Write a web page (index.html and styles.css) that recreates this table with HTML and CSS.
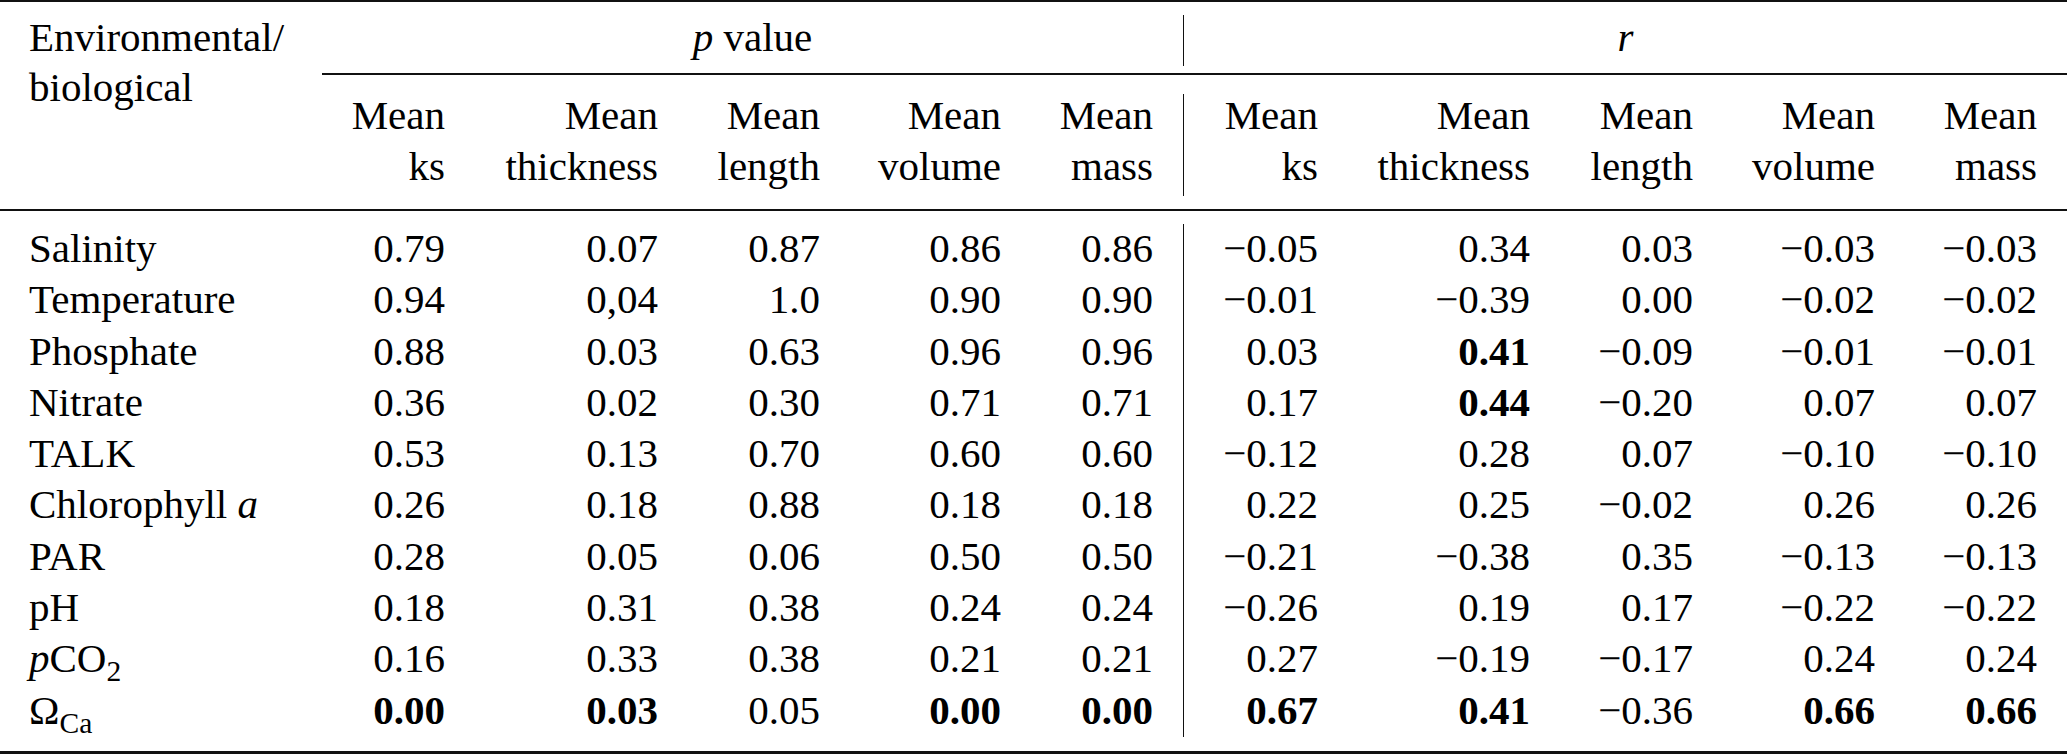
FILE: index.html
```html
<!DOCTYPE html>
<html lang="en">
<head>
<meta charset="utf-8">
<title>Correlation table</title>
<link rel="stylesheet" href="styles.css">
</head>
<body>
<div class="tbl">
  <div class="head">
    <div class="lab hlab">Environmental/<br>biological</div>
    <div class="grp grp-p"><i>p</i> value</div>
    <div class="vdiv vA"></div>
    <div class="grp grp-r"><i>r</i></div>
    <div class="cmid"></div>
    <div class="hc">Mean<br>ks</div>
    <div class="hc">Mean<br>thickness</div>
    <div class="hc">Mean<br>length</div>
    <div class="hc">Mean<br>volume</div>
    <div class="hc">Mean<br>mass</div>
    <div class="vdiv vB"></div>
    <div class="hc">Mean<br>ks</div>
    <div class="hc">Mean<br>thickness</div>
    <div class="hc">Mean<br>length</div>
    <div class="hc">Mean<br>volume</div>
    <div class="hc">Mean<br>mass</div>
  </div>
  <div class="body">
    <div class="vdiv vBody"></div>

    <div class="lab">Salinity</div>
    <div class="n">0.79</div><div class="n">0.07</div><div class="n">0.87</div><div class="n">0.86</div><div class="n">0.86</div>
    <div class="n">&minus;0.05</div><div class="n">0.34</div><div class="n">0.03</div><div class="n">&minus;0.03</div><div class="n">&minus;0.03</div>

    <div class="lab">Temperature</div>
    <div class="n">0.94</div><div class="n">0,04</div><div class="n">1.0</div><div class="n">0.90</div><div class="n">0.90</div>
    <div class="n">&minus;0.01</div><div class="n">&minus;0.39</div><div class="n">0.00</div><div class="n">&minus;0.02</div><div class="n">&minus;0.02</div>

    <div class="lab">Phosphate</div>
    <div class="n">0.88</div><div class="n">0.03</div><div class="n">0.63</div><div class="n">0.96</div><div class="n">0.96</div>
    <div class="n">0.03</div><div class="n b">0.41</div><div class="n">&minus;0.09</div><div class="n">&minus;0.01</div><div class="n">&minus;0.01</div>

    <div class="lab">Nitrate</div>
    <div class="n">0.36</div><div class="n">0.02</div><div class="n">0.30</div><div class="n">0.71</div><div class="n">0.71</div>
    <div class="n">0.17</div><div class="n b">0.44</div><div class="n">&minus;0.20</div><div class="n">0.07</div><div class="n">0.07</div>

    <div class="lab">TALK</div>
    <div class="n">0.53</div><div class="n">0.13</div><div class="n">0.70</div><div class="n">0.60</div><div class="n">0.60</div>
    <div class="n">&minus;0.12</div><div class="n">0.28</div><div class="n">0.07</div><div class="n">&minus;0.10</div><div class="n">&minus;0.10</div>

    <div class="lab">Chlorophyll <i>a</i></div>
    <div class="n">0.26</div><div class="n">0.18</div><div class="n">0.88</div><div class="n">0.18</div><div class="n">0.18</div>
    <div class="n">0.22</div><div class="n">0.25</div><div class="n">&minus;0.02</div><div class="n">0.26</div><div class="n">0.26</div>

    <div class="lab">PAR</div>
    <div class="n">0.28</div><div class="n">0.05</div><div class="n">0.06</div><div class="n">0.50</div><div class="n">0.50</div>
    <div class="n">&minus;0.21</div><div class="n">&minus;0.38</div><div class="n">0.35</div><div class="n">&minus;0.13</div><div class="n">&minus;0.13</div>

    <div class="lab">pH</div>
    <div class="n">0.18</div><div class="n">0.31</div><div class="n">0.38</div><div class="n">0.24</div><div class="n">0.24</div>
    <div class="n">&minus;0.26</div><div class="n">0.19</div><div class="n">0.17</div><div class="n">&minus;0.22</div><div class="n">&minus;0.22</div>

    <div class="lab"><i>p</i>CO<sub>2</sub></div>
    <div class="n">0.16</div><div class="n">0.33</div><div class="n">0.38</div><div class="n">0.21</div><div class="n">0.21</div>
    <div class="n">0.27</div><div class="n">&minus;0.19</div><div class="n">&minus;0.17</div><div class="n">0.24</div><div class="n">0.24</div>

    <div class="lab">&Omega;<sub>Ca</sub></div>
    <div class="n b">0.00</div><div class="n b">0.03</div><div class="n">0.05</div><div class="n b">0.00</div><div class="n b">0.00</div>
    <div class="n b">0.67</div><div class="n b">0.41</div><div class="n">&minus;0.36</div><div class="n b">0.66</div><div class="n b">0.66</div>
  </div>
</div>
</body>
</html>
```

FILE: styles.css
```css
html, body {
  margin: 0;
  padding: 0;
  background: #ffffff;
}

.tbl {
  width: 2067px;
  font-family: "Liberation Serif", "Tinos", "Times New Roman", "Nimbus Roman", "DejaVu Serif", serif;
  font-size: 41px;
  color: #000000;
}

.tbl div,
.tbl i,
.tbl sub {
  font-family: "Liberation Serif", "Tinos", "Times New Roman", "Nimbus Roman", "DejaVu Serif", serif;
}

.head,
.body {
  display: grid;
  grid-template-columns: 322px 153px 213px 162px 181px 152px 1px 164px 212px 163px 182px 162px;
}

.head {
  grid-template-rows: 71px 2px 134px;
  border-top: 2px solid #111111;
  border-bottom: 2px solid #111111;
}

.lab {
  grid-column: 1;
  padding-left: 29px;
  white-space: nowrap;
}

.hlab {
  grid-row: 1 / 4;
  line-height: 49.7px;
  padding-top: 11.35px;
}

.grp {
  grid-row: 1;
  line-height: 49.7px;
  padding-top: 11.35px;
  text-align: center;
  white-space: nowrap;
}

.grp-p {
  grid-column: 2 / 7;
}

.grp-r {
  grid-column: 8 / 13;
}

.vdiv {
  grid-column: 7;
  background: #111111;
}

.vA {
  grid-row: 1;
  margin: 13px 0 7px;
}

.cmid {
  grid-column: 2 / 13;
  grid-row: 2;
  background: #111111;
}

.hc {
  grid-row: 3;
  text-align: right;
  padding: 14.65px 30px 0 0;
  line-height: 51.7px;
  white-space: nowrap;
}

.vB {
  grid-row: 3;
  margin: 19px 0 13px;
}

.body {
  grid-template-rows: repeat(10, 51.3px);
  padding: 13px 0 14px;
  border-bottom: 3px solid #111111;
}

.vBody {
  grid-row: 1 / -1;
}

.body .lab {
  line-height: 48px;
}

.n {
  text-align: right;
  padding-right: 30px;
  line-height: 48px;
  white-space: nowrap;
}

.b {
  font-weight: bold;
}

sub {
  font-size: 0.72em;
  line-height: 0;
  vertical-align: -0.3em;
}
```
